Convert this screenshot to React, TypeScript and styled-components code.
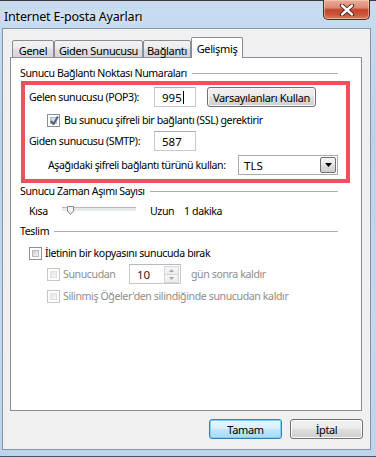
import React from 'react';
import styled, { createGlobalStyle } from 'styled-components';

const Global = createGlobalStyle`
  html, body { margin: 0; padding: 0; }
  body {
    width: 376px; height: 457px; overflow: hidden;
    font-family: "Noto Sans", "Open Sans", sans-serif;
    font-size: 10.6px; color: #000;
  }
  * { box-sizing: border-box; }
`;

const Win = styled.div`
  width: 376px; height: 457px;
  background: linear-gradient(180deg, #c7dcf0 0%, #bcd3ea 30%, #c4d9ee 70%, #bdd4eb 100%);
  border-top: 1px solid #3a3a3a;
  border-bottom: 1px solid #4a5563;
  display: flex; flex-direction: column;
`;

const TitleBar = styled.div`
  height: 27px; display: flex; align-items: flex-start; justify-content: space-between;
`;

const Title = styled.div`
  margin: 7px 0 0 4px;
  font-size: 12.5px; letter-spacing: -0.2px; color: #000;
  text-shadow: 0 0 6px rgba(255,255,255,0.9);
`;

const CloseBtn = styled.div`
  width: 47px; height: 20px; margin: -1px 6px 0 0;
  border: 1px solid #5e2418; border-top: none;
  border-radius: 0 0 5px 5px;
  background: linear-gradient(180deg, #e9ab98 0%, #dc8a74 40%, #c4452e 52%, #c9533a 75%, #dd7f62 100%);
  box-shadow: inset 0 0 0 1px rgba(255,220,200,0.5);
  display: flex; align-items: center; justify-content: center;
`;

const Client = styled.div`
  margin: 0 5px 6px 2px; flex: 1;
  background: #f0f0f0;
  border: 1px solid #8596ab;
  display: flex; flex-direction: column;
`;

const TabStrip = styled.div`
  display: flex; align-items: flex-end; height: 21px;
  margin: 8px 0 -1px 9px; position: relative; z-index: 1;
`;

const Tab = styled.div<{ $w: number; $active?: boolean }>`
  width: ${p => p.$w}px;
  height: ${p => (p.$active ? 21 : 18)}px;
  border: 1px solid #898c95;
  border-bottom: ${p => (p.$active ? 'none' : '1px solid #898c95')};
  border-radius: 2px 2px 0 0;
  background: ${p => (p.$active ? '#ffffff' : 'linear-gradient(180deg, #f3f3f3 0%, #ececec 45%, #dedede 55%, #d6d6d6 100%)')};
  display: flex; justify-content: center;
  padding-top: ${p => (p.$active ? 3 : 2)}px;
  font-size: 11px;
  letter-spacing: -0.35px;
  white-space: nowrap;
`;

const Panel = styled.div`
  margin-left: 7px; width: 352px; height: 354px;
  background: #fff; border: 1px solid #898c95;
  padding: 8px 0 0 9px;
  display: flex; flex-direction: column;
`;

const GroupHeader = styled.div<{ $mt: number }>`
  display: flex; align-items: center; gap: 5px;
  width: 318px; height: 14px; margin-top: ${p => p.$mt}px;
  white-space: nowrap; letter-spacing: -0.4px;
  &::after { content: ''; flex: 1; height: 1px; background: #a8acb0; }
`;

const RedBox = styled.div`
  margin: 1px 0 0 1px; width: 329px; height: 102px;
  border: 4px solid #f0505c;
  padding: 0 0 0 4px;
  display: flex; flex-direction: column;
`;

const Row = styled.div<{ $mt: number; $pl?: number }>`
  display: flex; align-items: center; height: 20px;
  margin-top: ${p => p.$mt}px; padding-left: ${p => p.$pl ?? 0}px;
  white-space: nowrap; letter-spacing: -0.4px;
`;

const Label = styled.span<{ $w?: number; $dis?: boolean; $ml?: number }>`
  display: inline-block;
  ${p => (p.$w ? `width: ${p.$w}px;` : '')}
  margin-left: ${p => p.$ml ?? 0}px;
  color: ${p => (p.$dis ? '#8d8d8d' : '#000')};
`;

const TextBox = styled.div<{ $w: number }>`
  width: ${p => p.$w}px; height: 20px;
  border: 1px solid #c5cad1; border-top-color: #abadb3;
  background: #fff;
  padding: 0 0 0 7px;
  display: flex; align-items: center;
  font-size: 11.5px; letter-spacing: 0;
  color: #000;
`;

const Caret = styled.span`
  display: inline-block; width: 1px; height: 13px; background: #000; margin-left: 1px;
`;

const Button = styled.div<{ $w: number; $ml?: number; $def?: boolean }>`
  width: ${p => p.$w}px; height: 20px;
  margin-left: ${p => p.$ml ?? 0}px;
  border: 1px solid ${p => (p.$def ? '#3c7fb1' : '#707070')};
  border-radius: 3px;
  background: ${p => (p.$def
    ? 'linear-gradient(180deg, #eaf6fd 0%, #d9f0fc 45%, #bee6fd 55%, #a7d9f5 100%)'
    : 'linear-gradient(180deg, #f2f2f2 0%, #ebebeb 45%, #dddddd 55%, #cfcfcf 100%)')};
  box-shadow: inset 0 0 0 1px ${p => (p.$def ? '#7fd0f3' : '#fbfbfb')};
  display: flex; align-items: center; justify-content: center;
  font-size: 11px;
  letter-spacing: -0.35px; white-space: nowrap;
`;

const Box = styled.span<{ $dis?: boolean }>`
  width: 13px; height: 13px; flex: none;
  border: 1px solid ${p => (p.$dis ? '#c6c6c6' : '#8e8f8f')};
  background: #fff;
  padding: 2px;
  display: inline-flex;
  position: relative;
  &::before {
    content: ''; flex: 1;
    background: ${p => (p.$dis
      ? 'linear-gradient(135deg, #e6e6e6 0%, #f7f7f7 100%)'
      : 'linear-gradient(135deg, #cbcfd5 0%, #f6f6f6 100%)')};
    border: 1px solid ${p => (p.$dis ? '#e0e0e0' : '#b6b9bd')};
  }
`;

const Check = styled.svg`
  position: absolute; left: 1px; top: 0px;
`;

const Select = styled.div`
  width: 100px; height: 20px;
  border: 1px solid #a5acb5;
  background: #fff;
  display: flex; align-items: center; justify-content: space-between;
  padding: 0 1px 0 5px;
  font-size: 11.5px; letter-spacing: 0;
`;

const DropBtn = styled.div`
  width: 16px; height: 16px;
  border: 1px solid #707070; border-radius: 2px;
  background: linear-gradient(180deg, #f2f2f2 0%, #ebebeb 45%, #dddddd 55%, #cfcfcf 100%);
  display: flex; align-items: center; justify-content: center;
`;

const Track = styled.div`
  width: 74px; height: 20px; position: relative;
  display: flex; align-items: center;
  &::before {
    content: ''; width: 100%; height: 3px;
    border-top: 1px solid #b7b7b7; border-bottom: 1px solid #fff;
    background: #e7eaea;
    margin-top: -4px;
  }
`;

const Thumb = styled.svg`
  position: absolute; left: 4px; top: 5px;
`;

const Spin = styled.div`
  width: 52px; height: 20px;
  border: 1px solid #c5c9cc; border-top-color: #b5b9bd;
  background: #fff;
  display: flex; align-items: stretch;
  padding: 1px;
`;

const SpinText = styled.div`
  flex: 1; display: flex; align-items: center; padding-left: 6px;
  font-size: 11.5px; letter-spacing: 0; color: #222;
`;

const SpinBtns = styled.div`
  width: 15px; display: flex; flex-direction: column;
`;

const SpinBtn = styled.div`
  flex: 1; border: 1px solid #d4d7da; margin-bottom: -1px;
  background: linear-gradient(180deg, #f7f7f7, #ececec);
  display: flex; align-items: center; justify-content: center;
`;

const Footer = styled.div`
  display: flex; justify-content: flex-end; gap: 8px;
  padding: 8px 7px 0 0;
`;

const CheckBox = ({ checked, dis }: { checked?: boolean; dis?: boolean }) => (
  <Box $dis={dis}>
    {checked && (
      <Check width="11" height="12" viewBox="0 0 11 12">
        <path d="M2 6 L4.5 9 L9 1.5" stroke="#4a5f8a" strokeWidth="2" fill="none" strokeLinejoin="round" />
      </Check>
    )}
  </Box>
);

export default function App() {
  return (
    <>
      <Global />
      <Win>
        <TitleBar>
          <Title>Internet E-posta Ayarları</Title>
          <CloseBtn>
            <svg width="16" height="12" viewBox="0 0 16 12">
              <path d="M3 1.5 L13 10.5 M13 1.5 L3 10.5" stroke="#3b1a14" strokeWidth="4.2" strokeLinecap="round" />
              <path d="M3 1.5 L13 10.5 M13 1.5 L3 10.5" stroke="#ffffff" strokeWidth="2.4" strokeLinecap="round" />
            </svg>
          </CloseBtn>
        </TitleBar>
        <Client>
          <TabStrip>
            <Tab $w={42}>Genel</Tab>
            <Tab $w={89}>Giden Sunucusu</Tab>
            <Tab $w={48}>Bağlantı</Tab>
            <Tab $w={52} $active>Gelişmiş</Tab>
          </TabStrip>
          <Panel>
            <GroupHeader $mt={0}>Sunucu Bağlantı Noktası Numaraları</GroupHeader>
            <RedBox>
              <Row $mt={2}>
                <Label $w={125}>Gelen sunucusu (POP3):</Label>
                <TextBox $w={42}>995<Caret /></TextBox>
                <Button $w={109} $ml={11}>Varsayılanları Kullan</Button>
              </Row>
              <Row $mt={3} $pl={18}>
                <CheckBox checked />
                <Label $ml={4}>Bu sunucu şifreli bir bağlantı (SSL) gerektirir</Label>
              </Row>
              <Row $mt={1}>
                <Label $w={125}>Giden sunucusu (SMTP):</Label>
                <TextBox $w={42}>587</TextBox>
              </Row>
              <Row $mt={4} $pl={19}>
                <Label $w={190}>Aşağıdaki şifreli bağlantı türünü kullan:</Label>
                <Select>
                  TLS
                  <DropBtn>
                    <svg width="7" height="4" viewBox="0 0 7 4"><path d="M0 0 H7 L3.5 4 Z" fill="#000" /></svg>
                  </DropBtn>
                </Select>
              </Row>
            </RedBox>
            <GroupHeader $mt={1}>Sunucu Zaman Aşımı Sayısı</GroupHeader>
            <Row $mt={3} $pl={9}>
              <Label $w={33}>Kısa</Label>
              <Track>
                <Thumb width="9" height="9" viewBox="0 0 9 9">
                  <path d="M1.5 0.5 H7.5 V5 L4.5 8.5 L1.5 5 Z" fill="#f4f4f4" stroke="#8a8a8a" />
                </Thumb>
              </Track>
              <Label $w={34} $ml={14}>Uzun</Label>
              <Label>1 dakika</Label>
            </Row>
            <GroupHeader $mt={3}>Teslim</GroupHeader>
            <Row $mt={5} $pl={9}>
              <CheckBox />
              <Label $ml={3}>İletinin bir kopyasını sunucuda bırak</Label>
            </Row>
            <Row $mt={1} $pl={27}>
              <CheckBox dis />
              <Label $w={66} $ml={3} $dis>Sunucudan</Label>
              <Spin>
                <SpinText>10</SpinText>
                <SpinBtns>
                  <SpinBtn>
                    <svg width="5" height="3" viewBox="0 0 5 3"><path d="M0 3 H5 L2.5 0 Z" fill="#a8a8a8" /></svg>
                  </SpinBtn>
                  <SpinBtn>
                    <svg width="5" height="3" viewBox="0 0 5 3"><path d="M0 0 H5 L2.5 3 Z" fill="#a8a8a8" /></svg>
                  </SpinBtn>
                </SpinBtns>
              </Spin>
              <Label $ml={10} $dis>gün sonra kaldır</Label>
            </Row>
            <Row $mt={2} $pl={27}>
              <CheckBox dis />
              <Label $ml={3} $dis>Silinmiş Öğeler'den silindiğinde sunucudan kaldır</Label>
            </Row>
          </Panel>
          <Footer>
            <Button $w={73} $def>Tamam</Button>
            <Button $w={73}>İptal</Button>
          </Footer>
        </Client>
      </Win>
    </>
  );
}
